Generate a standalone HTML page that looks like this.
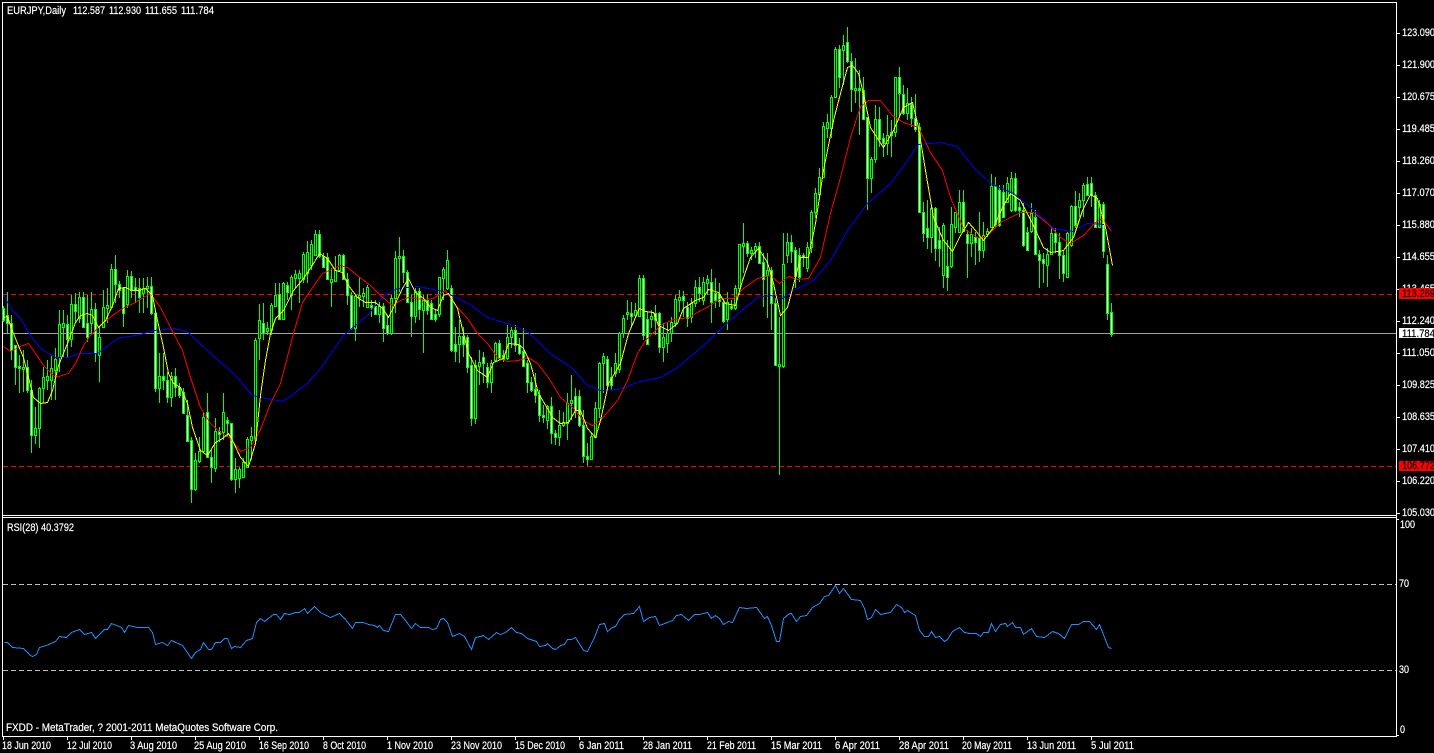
<!DOCTYPE html>
<html><head><meta charset="utf-8"><title>EURJPY,Daily</title>
<style>
html,body{margin:0;padding:0;background:#000;width:1434px;height:753px;overflow:hidden}
svg{display:block;position:absolute;left:0;top:0}
text{font-family:"Liberation Sans",sans-serif;font-size:11px;fill:#fff;stroke:#fff;stroke-width:.2;transform:translateY(-1px)}
</style></head><body>
<svg width="1434" height="753" viewBox="0 0 1434 753" xmlns="http://www.w3.org/2000/svg">
<defs>
<path id="w" d="M3 309V319M7 316V322M11 324V349M15 346V366M19 367V367M27 368V389M31 391V434M67 325V338M75 305V310M83 298V326M87 324V336M95 310V352M115 270V283M119 285V289M123 289V312M131 277V289M135 288V289M139 289V296M151 287V312M155 314V387M163 377V379M167 381V396M175 377V386M179 388V394M183 393V412M187 416V440M191 441V488M207 413V456M211 458V466M219 432V433M227 421V422M231 424V478M263 324V332M279 295V318M287 286V291M319 235V255M323 257V266M327 258V278M343 256V278M347 280V294M351 296V327M371 306V306M375 307V313M383 307V327M387 326V332M403 257V271M407 273V301M411 303V315M419 292V308M427 301V309M431 304V318M435 315V318M451 289V349M455 345V350M463 337V343M467 338V366M471 366V417M483 358V362M487 368V381M499 344V357M503 356V358M515 331V344M519 346V352M523 352V365M527 364V381M531 383V389M535 390V394M539 396V414M543 416V416M551 407V432M555 434V436M575 397V409M579 397V424M583 426V455M587 457V458M607 360V384M611 378V384M631 314V315M643 279V334M647 320V343M655 314V319M659 314V346M683 297V299M687 308V317M699 288V292M711 283V301M715 294V299M719 295V300M723 303V320M731 307V307M747 244V252M759 247V262M763 263V278M771 271V302M775 304V364M791 243V250M795 251V275M799 256V276M803 256V256M839 50V76M847 43V60M851 62V88M859 89V89M863 91V118M867 118V177M879 120V138M883 139V142M899 78V92M903 95V112M911 105V117M915 119V128M919 128V211M923 213V232M927 229V236M935 209V247M939 241V247M947 267V276M963 203V230M967 235V242M975 238V241M979 239V249M995 187V223M999 191V224M1003 193V216M1015 179V209M1019 208V209M1023 211V244M1027 233V249M1035 218V253M1039 255V259M1043 260V262M1055 234V241M1059 243V254M1063 256V272M1075 207V224M1087 185V194M1091 184V194M1095 196V226M1103 205V250M1107 265V312M1111 313V333"/>
<path id="k" d="M23 368V368M35 429V434M39 389V427M43 378V387M47 377V379M51 369V379M55 360V369M59 325V356M63 324V326M71 305V338M79 298V317M91 310V322M99 338V354M103 308V326M107 306V307M111 270V306M127 277V303M143 289V292M147 287V287M159 377V387M171 377V396M195 461V488M199 452V460M203 418V450M215 432V467M223 413V431M235 470V478M239 470V477M243 463V476M247 440V466M251 437V439M255 341V439M259 321V337M267 329V330M271 306V329M275 296V305M283 284V318M291 278V294M295 275V277M299 274V277M303 255V278M307 253V272M311 245V264M315 235V254M331 280V281M335 271V280M339 256V269M355 297V327M359 296V296M363 294V295M367 288V306M379 307V313M391 299V332M395 259V297M399 257V257M415 292V315M423 301V309M439 278V313M443 270V277M447 261V287M459 337V343M475 366V417M479 363V365M491 364V381M495 344V359M507 338V357M511 331V336M547 407V419M559 426V436M563 423V424M567 404V422M571 401V402M591 437V458M595 409V436M599 364V407M603 357V362M615 364V372M619 334V368M623 319V332M627 313V313M635 311V314M639 279V315M651 317V318M663 338V346M667 334V342M671 323V332M675 300V322M679 298V299M691 304V316M695 288V302M703 283V299M707 280V282M727 303V318M735 289V307M739 245V287M743 244V245M751 251V252M755 247V249M767 271V274M779 365V365M783 265V365M787 243V254M807 248V267M811 213V246M815 194V211M819 178V193M823 127V176M827 123V127M831 98V127M835 50V96M843 46V49M855 89V89M871 160V177M875 120V158M887 136V142M891 133V134M895 78V131M907 104V112M931 209V236M943 226V274M951 225V265M955 213V226M959 203V231M971 235V242M983 236V249M987 232V233M991 187V226M1007 184V201M1011 179V209M1031 214V230M1047 255V264M1051 234V253M1067 234V276M1071 207V244M1079 201V206M1083 186V199M1099 205V226"/>
</defs>
<g shape-rendering="crispEdges">
<!-- frame -->
<path d="M2.5 736V2.5H1396.5V736M2.5 515.5H1396.5M2.5 517.5H1396.5M2 736.5H1397" fill="none" stroke="#fff" stroke-width="1"/>
<path d="M1397 33.5h3M1397 65.5h3M1397 97.5h3M1397 129.5h3M1397 161.5h3M1397 193.5h3M1397 225.5h3M1397 257.5h3M1397 289.5h3M1397 321.5h3M1397 353.5h3M1397 385.5h3M1397 417.5h3M1397 449.5h3M1397 481.5h3M1397 513.5h3M1397 519.5h2M1397 735.5h2" stroke="#fff" fill="none"/>
<path d="M3.5 737v3M67.5 737v3M131.5 737v3M195.5 737v3M259.5 737v3M323.5 737v3M387.5 737v3M451.5 737v3M515.5 737v3M579.5 737v3M643.5 737v3M707.5 737v3M771.5 737v3M835.5 737v3M899.5 737v3M963.5 737v3M1027.5 737v3M1091.5 737v3" stroke="#fff" fill="none"/>
<!-- level lines -->
<path d="M3 294.5H1396M3 466.5H1396" stroke="#f00" stroke-dasharray="5 3" fill="none"/>
<path d="M3 333.5H1396" stroke="#a0a0a0" fill="none"/>
<path d="M3 584.5H1396M3 670.5H1396" stroke="#c0c0c0" stroke-dasharray="5 3" fill="none"/>
<!-- wicks -->
<path transform="translate(.5 0)" stroke="#0f0" fill="none" d="M3 306V322M7 292V333M11 315V360M15 345V385M19 355V393M23 350V392M27 360V393M31 380V453M35 407V444M39 387V448M43 367V403M47 360V390M51 355V400M55 348V400M59 310V372M63 310V357M67 315V357M71 295V347M75 293V322M79 292V323M83 292V328M87 295V342M91 292V333M95 303V362M99 327V382M103 290V327M107 288V323M111 264V308M115 255V303M119 281V298M123 287V327M127 270V308M131 271V298M135 278V303M139 278V313M143 278V313M147 277V308M151 277V315M155 310V392M159 353V403M163 353V390M167 372V403M171 372V407M175 368V397M179 383V398M183 388V413M187 400V442M191 437V503M195 453V491M199 437V463M203 412V453M207 393V458M211 450V483M215 418V472M219 427V442M223 393V440M227 417V437M231 423V481M235 458V493M239 467V488M243 458V478M247 437V467M251 427V460M255 338V441M259 304V360M263 303V340M267 322V335M271 303V335M275 283V307M279 283V320M283 282V320M287 282V300M291 275V310M295 270V288M299 270V303M303 252V283M307 241V283M311 240V270M315 230V255M319 230V258M323 253V267M327 253V279M331 268V307M335 256V282M339 254V272M343 254V280M347 273V305M351 292V330M355 294V341M359 277V307M363 288V307M367 285V308M371 300V317M375 300V315M379 302V323M383 303V342M387 315V335M391 295V335M395 251V313M399 237V292M403 250V283M407 270V302M411 295V337M415 288V323M419 288V320M423 295V353M427 294V315M431 300V320M435 310V322M439 277V317M443 267V300M447 250V290M451 285V352M455 327V362M459 320V363M463 327V357M467 335V373M471 357V426M475 360V424M479 350V385M483 352V383M487 363V388M491 360V393M495 342V362M499 340V360M503 350V362M507 325V360M511 327V348M515 325V352M519 338V355M523 328V367M527 360V393M531 377V392M535 373V403M539 390V422M543 405V423M547 405V429M551 397V444M555 430V445M559 410V446M563 412V427M567 393V440M571 375V420M575 388V418M579 390V427M583 410V463M587 443V466M591 433V460M595 402V438M599 362V418M603 353V393M607 356V390M611 367V390M615 353V377M619 332V373M623 315V338M627 300V320M631 302V327M635 303V317M639 275V317M643 275V340M647 312V345M651 310V328M655 305V335M659 312V353M663 323V362M667 322V353M671 317V342M675 295V327M679 290V312M683 291V317M687 302V327M691 298V323M695 280V307M699 277V302M703 277V305M707 275V295M711 269V323M715 278V308M719 283V307M723 298V323M727 292V330M731 300V310M735 285V310M739 244V295M743 223V273M747 241V257M751 247V260M755 243V258M759 242V263M763 253V307M767 253V318M771 267V330M775 298V365M779 317V475M783 233V368M787 233V263M791 235V263M795 247V288M799 248V282M803 253V267M807 242V272M811 210V253M815 188V218M819 168V200M823 122V178M827 114V138M831 95V138M835 47V98M839 45V88M843 35V85M847 27V63M851 53V112M855 58V103M859 70V135M863 77V120M867 117V210M871 157V193M875 105V163M879 107V147M883 133V157M887 115V155M891 120V157M895 77V137M899 67V117M903 85V115M907 88V120M911 97V127M915 94V132M919 123V213M923 202V242M927 200V249M931 207V253M935 207V261M939 227V267M943 223V288M947 240V291M951 207V268M955 212V233M959 190V233M963 190V232M967 230V278M971 228V257M975 232V265M979 212V262M983 222V258M987 228V237M991 174V228M995 177V227M999 185V227M1003 185V217M1007 177V203M1011 172V212M1015 173V212M1019 202V217M1023 203V247M1027 227V250M1031 203V233M1035 210V255M1039 250V288M1043 253V283M1047 248V287M1051 228V255M1055 228V253M1059 233V279M1063 250V282M1067 232V278M1071 205V247M1075 191V228M1079 193V217M1083 183V217M1087 177V195M1091 177V207M1095 192V228M1099 200V228M1103 202V258M1107 255V320M1111 303V337"/>
<!-- bodies -->
<g transform="translate(.5 .5)" fill="none">
<use href="#w" stroke="#0f0" stroke-width="3" stroke-linecap="square"/>
<use href="#k" stroke="#0f0" stroke-width="3" stroke-linecap="square"/>
<use href="#w" stroke="#fff" stroke-width="1" stroke-linecap="square"/>
<use href="#k" stroke="#000" stroke-width="1" stroke-linecap="square"/>
</g>
<!-- moving averages -->
<g fill="none" stroke-width="1" transform="translate(.5 .5)">
<polyline stroke="#00f" points="3,295 12,310 20,318 30,335 40,348 55,357 67,357 80,353 97,353 117,338 140,334 153,330 175,328 188,332 210,353 233,373 252,395 260,397 282,401 288,397 307,383 320,368 343,335 367,315 383,295 397,288 418,286 443,291 468,303 487,317 510,324 520,328 528,332 550,353 572,368 587,385 600,390 617,389 640,381 660,377 677,367 703,345 733,317 757,297 770,295 782,298 793,290 813,280 830,260 847,230 867,203 890,183 905,163 918,144 940,142 957,146 973,167 990,183 1013,193 1037,213 1053,228 1072,231 1087,223 1105,224 1111,228"/>
<polyline stroke="#f00" points="3,346 10,351 20,346 28,343 35,353 43,365 55,377 68,373 75,363 83,345 90,335 100,325 112,315 122,308 133,303 150,293 160,307 170,327 182,350 190,377 200,407 210,423 220,432 230,438 240,451 250,447 260,429 270,403 280,383 293,333 302,302 310,290 322,273 340,265 347,267 358,276 370,285 380,295 392,305 400,300 408,297 423,299 433,298 445,290 457,307 467,318 477,333 487,343 497,357 507,361 518,360 528,357 537,363 548,377 560,397 573,408 583,420 592,425 600,420 617,400 627,380 637,353 645,340 660,325 673,319 690,317 695,313 710,305 720,298 733,298 743,288 757,278 770,275 779,283 788,276 797,279 808,278 820,257 830,213 840,177 850,137 860,106 868,100 880,100 892,115 903,122 918,127 930,152 942,170 950,197 963,228 977,237 985,237 1000,222 1020,212 1033,212 1047,223 1060,237 1070,243 1083,235 1095,222 1102,218 1111,231"/>
<polyline stroke="#ff0" points="3,317 7,316 11,328 17,343 23,357 28,377 33,397 40,403 47,402 52,390 58,365 67,343 75,322 80,315 87,313 92,315 98,327 105,320 112,305 118,288 125,287 132,290 138,290 145,288 152,295 157,320 163,347 168,373 173,383 180,387 187,403 192,427 200,450 207,455 215,442 222,438 228,433 233,442 240,457 248,466 255,443 260,395 265,360 270,333 275,318 283,310 293,290 303,278 313,263 319,253 327,258 335,270 342,272 348,285 357,297 365,302 375,302 382,308 388,317 393,307 402,288 408,278 415,292 423,298 430,307 437,310 443,295 448,293 457,308 463,333 468,353 477,370 487,377 493,362 503,358 508,343 518,344 523,348 530,363 538,393 547,408 552,417 560,423 568,422 575,410 580,410 587,428 595,437 600,420 608,383 620,363 628,333 639,308 645,311 653,312 658,325 668,330 677,323 683,308 695,300 703,297 708,289 718,292 725,303 735,305 742,280 750,257 758,248 767,262 773,283 780,315 787,307 795,277 800,257 808,257 815,223 823,170 833,120 840,93 847,67 852,65 858,73 863,93 870,127 877,138 883,147 893,130 903,107 912,102 918,127 925,170 933,217 943,240 952,251 960,235 968,222 975,230 983,240 993,227 1002,207 1010,193 1020,200 1032,223 1043,247 1050,252 1063,250 1073,237 1082,210 1090,194 1097,198 1105,227 1112,265"/>
<polyline stroke="#1e90ff" points="4,642 7,642 12,647 23,648 30,655 32,656 36,654 39,647 46,645 55,641 59,636 66,637 71,632 79,629 84,634 91,632 95,638 104,629 107,629 111,623 121,627 124,632 128,625 137,627 143,627 148,627 152,632 155,644 162,642 167,645 171,640 182,645 191,658 195,652 200,649 203,642 208,649 211,649 215,642 220,642 224,638 227,638 231,648 234,646 240,647 246,640 252,638 256,622 260,618 264,621 273,614 276,614 280,619 284,613 289,614 295,612 299,612 304,608 307,613 314,606 320,612 330,617 339,613 345,619 352,628 355,622 363,622 368,624 374,625 377,627 379,625 383,630 388,631 395,614 400,614 405,620 411,628 415,623 420,627 428,627 432,629 436,628 440,619 443,618 447,622 452,636 459,633 464,636 471,649 475,637 480,636 483,635 488,639 496,632 500,634 505,632 511,627 516,632 521,633 527,638 536,641 539,646 545,645 547,643 552,648 555,649 560,645 564,644 567,639 571,639 575,637 583,650 587,651 594,637 599,624 604,623 607,631 612,627 615,626 619,619 624,614 633,613 639,606 643,621 649,617 655,616 659,625 667,622 672,620 676,615 681,614 688,620 694,614 699,614 707,612 711,618 715,615 719,618 723,624 728,621 732,622 739,607 746,608 756,607 764,618 767,616 771,625 776,641 779,641 783,618 789,613 791,613 796,621 800,616 806,615 812,607 819,603 824,596 828,595 835,585 839,593 843,588 851,599 860,600 864,608 867,619 871,617 875,609 880,614 890,612 896,604 901,607 904,612 907,610 915,615 919,630 924,636 928,636 931,631 935,637 939,636 944,641 947,639 952,631 959,627 964,632 969,633 976,633 980,636 983,632 988,632 991,623 995,631 1000,624 1005,623 1007,626 1012,622 1015,627 1020,627 1023,634 1031,628 1036,636 1044,637 1052,631 1058,633 1064,638 1071,624 1078,624 1083,621 1089,621 1096,629 1099,624 1108,647 1111,648"/>
</g>
</g>
<!-- top texts -->
<text x="7" y="15" textLength="59" lengthAdjust="spacingAndGlyphs">EURJPY,Daily</text>
<text x="73" y="15" textLength="32" lengthAdjust="spacingAndGlyphs">112.587</text>
<text x="109" y="15" textLength="32" lengthAdjust="spacingAndGlyphs">112.930</text>
<text x="145" y="15" textLength="32" lengthAdjust="spacingAndGlyphs">111.655</text>
<text x="181" y="15" textLength="33" lengthAdjust="spacingAndGlyphs">111.784</text>
<text x="7" y="532" textLength="67" lengthAdjust="spacingAndGlyphs">RSI(28) 40.3792</text>
<text x="6" y="732" textLength="272" lengthAdjust="spacingAndGlyphs">FXDD - MetaTrader, ? 2001-2011 MetaQuotes Software Corp.</text>
<!-- price axis -->
<g>
<text x="1402" y="37" textLength="33" lengthAdjust="spacingAndGlyphs">123.090</text>
<text x="1402" y="69" textLength="33" lengthAdjust="spacingAndGlyphs">121.900</text>
<text x="1402" y="101" textLength="33" lengthAdjust="spacingAndGlyphs">120.675</text>
<text x="1402" y="133" textLength="33" lengthAdjust="spacingAndGlyphs">119.485</text>
<text x="1402" y="165" textLength="33" lengthAdjust="spacingAndGlyphs">118.260</text>
<text x="1402" y="197" textLength="33" lengthAdjust="spacingAndGlyphs">117.070</text>
<text x="1402" y="229" textLength="33" lengthAdjust="spacingAndGlyphs">115.880</text>
<text x="1402" y="261" textLength="33" lengthAdjust="spacingAndGlyphs">114.655</text>
<text x="1402" y="293" textLength="33" lengthAdjust="spacingAndGlyphs">113.465</text>
<text x="1402" y="325" textLength="33" lengthAdjust="spacingAndGlyphs">112.240</text>
<text x="1402" y="357" textLength="33" lengthAdjust="spacingAndGlyphs">111.050</text>
<text x="1402" y="389" textLength="33" lengthAdjust="spacingAndGlyphs">109.825</text>
<text x="1402" y="421" textLength="33" lengthAdjust="spacingAndGlyphs">108.635</text>
<text x="1402" y="453" textLength="33" lengthAdjust="spacingAndGlyphs">107.410</text>
<text x="1402" y="485" textLength="33" lengthAdjust="spacingAndGlyphs">106.220</text>
<text x="1402" y="517" textLength="33" lengthAdjust="spacingAndGlyphs">105.030</text>
<rect x="1399" y="288" width="35" height="11" fill="#f00"/>
<text x="1402" y="298" textLength="33" lengthAdjust="spacingAndGlyphs" style="fill:#000;stroke:#000">113.269</text>
<rect x="1399" y="461" width="35" height="10" fill="#f00"/>
<text x="1402" y="470" textLength="33" lengthAdjust="spacingAndGlyphs" style="fill:#000;stroke:#000">106.772</text>
<rect x="1399" y="328" width="35" height="10" fill="#fff"/>
<text x="1402" y="338" textLength="33" lengthAdjust="spacingAndGlyphs" style="fill:#000;stroke:#000">111.784</text>
<text x="1400" y="529" textLength="15" lengthAdjust="spacingAndGlyphs">100</text>
<text x="1399" y="588" textLength="10" lengthAdjust="spacingAndGlyphs">70</text>
<text x="1399" y="674" textLength="10" lengthAdjust="spacingAndGlyphs">30</text>
<text x="1400" y="734" textLength="5" lengthAdjust="spacingAndGlyphs">0</text>
</g>
<!-- time axis -->
<g>
<text x="2" y="750" textLength="49" lengthAdjust="spacingAndGlyphs">18 Jun 2010</text>
<text x="67" y="750" textLength="45" lengthAdjust="spacingAndGlyphs">12 Jul 2010</text>
<text x="130" y="750" textLength="47" lengthAdjust="spacingAndGlyphs">3 Aug 2010</text>
<text x="194" y="750" textLength="52" lengthAdjust="spacingAndGlyphs">25 Aug 2010</text>
<text x="259" y="750" textLength="50" lengthAdjust="spacingAndGlyphs">16 Sep 2010</text>
<text x="323" y="750" textLength="43" lengthAdjust="spacingAndGlyphs">8 Oct 2010</text>
<text x="387" y="750" textLength="46" lengthAdjust="spacingAndGlyphs">1 Nov 2010</text>
<text x="451" y="750" textLength="51" lengthAdjust="spacingAndGlyphs">23 Nov 2010</text>
<text x="515" y="750" textLength="50" lengthAdjust="spacingAndGlyphs">15 Dec 2010</text>
<text x="579" y="750" textLength="45" lengthAdjust="spacingAndGlyphs">6 Jan 2011</text>
<text x="643" y="750" textLength="49" lengthAdjust="spacingAndGlyphs">28 Jan 2011</text>
<text x="707" y="750" textLength="49" lengthAdjust="spacingAndGlyphs">21 Feb 2011</text>
<text x="771" y="750" textLength="51" lengthAdjust="spacingAndGlyphs">15 Mar 2011</text>
<text x="835" y="750" textLength="45" lengthAdjust="spacingAndGlyphs">6 Apr 2011</text>
<text x="899" y="750" textLength="50" lengthAdjust="spacingAndGlyphs">28 Apr 2011</text>
<text x="962" y="750" textLength="50" lengthAdjust="spacingAndGlyphs">20 May 2011</text>
<text x="1027" y="750" textLength="49" lengthAdjust="spacingAndGlyphs">13 Jun 2011</text>
<text x="1091" y="750" textLength="43" lengthAdjust="spacingAndGlyphs">5 Jul 2011</text>
</g>
</svg>
</body></html>
